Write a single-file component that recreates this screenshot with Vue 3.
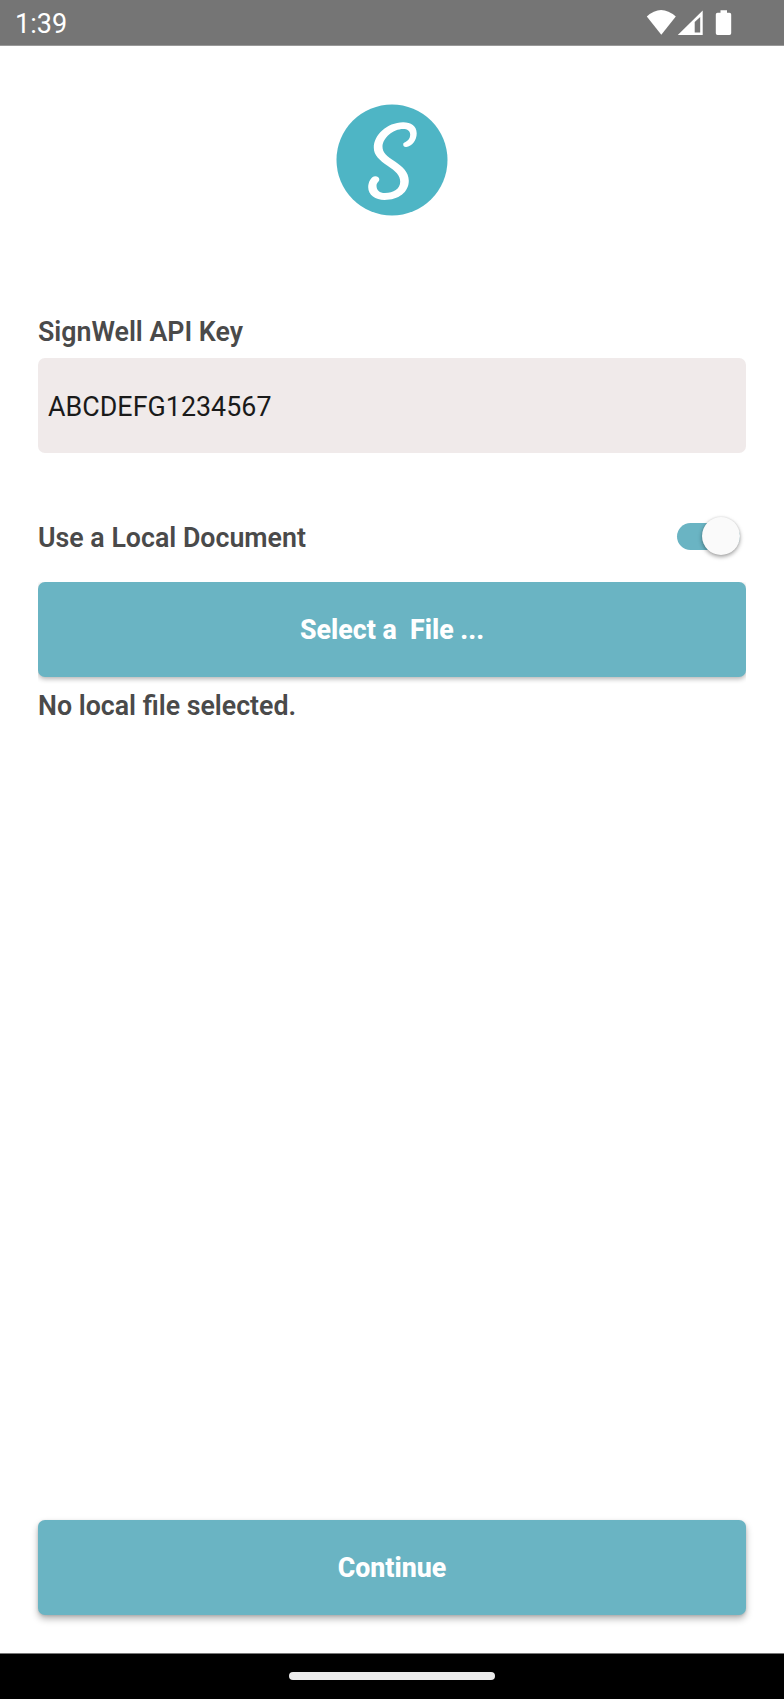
<script setup>
import { ref } from 'vue'

const apiKey = ref('ABCDEFG1234567')
const useLocal = ref(true)
</script>

<template>
  <div class="screen">
    <header class="status">
      <span class="time">1:39</span>
      <svg class="status-icons" width="154" height="45" viewBox="0 0 154 45" fill="#fff">
        <path d="M16.8 16.5Q31 3.5 45.8 16.5L31.3 34.8Z" />
        <path fill-rule="evenodd" d="M72.7 10.5V35H47.8ZM70.2 17L64.7 22V32.5H70.2Z" />
        <path d="M90.5 10.2H97V12.8H99.5Q101.2 12.8 101.2 14.5V33.3Q101.2 35 99.5 35H87.5Q85.8 35 85.8 33.3V14.5Q85.8 12.8 87.5 12.8H90.5Z" />
      </svg>
    </header>

    <main class="content">
      <svg class="logo" width="112" height="112" viewBox="0 0 112 112">
        <circle cx="56" cy="56" r="55.5" fill="#4eb5c5" />
        <path
          transform="translate(0.5 0.3)"
          d="M66.7 40C66.7 41.8 67.8 42.9 69.7 42.7C75.5 42 80.3 36 80.2 29C80 21.5 74.5 18 66.7 18C50 18.3 37.3 31 37.3 43.5C37.3 51 43 56 51 61.5C59 66.8 63.7 71 63.7 77.5C63.7 84.5 57 88.8 48.5 88.8C43 88.8 40 86 40 81.5C40 78.3 42.6 77.5 42.8 75.5C43 73.2 41.2 72 38.8 72C34.5 72 31.7 78 31.7 83C31.7 91 39 95.7 48 95.7C62 95.7 72.3 88 72.3 76.5C72.3 68 66 62.5 58.5 57.3C50 51.5 46 48.5 46 42.5C46 33.5 57 24.7 66.5 24.7C71 24.7 73.7 26.5 73.7 30.5C73.7 34 71.6 36.6 69 37.6C67.5 38.1 66.7 38.8 66.7 40Z"
          fill="#fff"
        />
      </svg>

      <label class="label key-label" for="key">SignWell API Key</label>
      <input id="key" v-model="apiKey" class="field" type="text" spellcheck="false" />

      <div class="row">
        <span class="label doc-label">Use a Local Document</span>
        <button
          class="switch" :class="{ on: useLocal }" role="switch" :aria-checked="useLocal"
          aria-label="Use a Local Document" @click="useLocal = !useLocal"
        >
          <span class="thumb"></span>
        </button>
      </div>

      <div class="file-wrap"><button class="button file">Select a&nbsp; File ...</button></div>
      <p class="label file-note">No local file selected.</p>

      <button class="button continue">Continue</button>
    </main>

    <footer class="nav"><span class="pill"></span></footer>
  </div>
</template>

<style>
body {
  margin: 0;
  background: #fff;
}
</style>

<style scoped>
.screen {
  display: flex;
  flex-direction: column;
  width: 784px;
  height: 1699px;
  overflow: hidden;
  background: #fff;
  font-family: Roboto, "Liberation Sans", sans-serif;
}
.status {
  box-sizing: border-box;
  display: flex;
  justify-content: space-between;
  flex: none;
  height: 46px;
  background: #757575;
  border-bottom: 1px solid #999;
}
.time {
  margin-left: 15px;
  color: #fff;
  font-size: 27px;
  line-height: 48px;
}
.content {
  display: flex;
  flex: 1;
  flex-direction: column;
  padding: 58px 38px 38px;
}
.logo {
  flex: none;
  align-self: center;
}
.label {
  color: #4a4a4a;
  font-size: 26.75px;
  font-weight: 600;
  line-height: 32px;
  white-space: nowrap;
}
.key-label {
  margin-top: 100px;
}
.field {
  box-sizing: border-box;
  height: 95px;
  margin: 10px 0 0;
  padding: 2px 10px 0;
  border: 0;
  border-radius: 7px;
  outline: 0;
  background: #f0eaea;
  color: #1a1a1a;
  font: 400 26.8px Roboto, "Liberation Sans", sans-serif;
  letter-spacing: 0.04px;
}
.row {
  display: flex;
  align-items: center;
  justify-content: space-between;
  height: 48px;
  margin-top: 59px;
}
.doc-label {
  padding-top: 4px;
}
.switch {
  display: flex;
  align-items: center;
  box-sizing: border-box;
  width: 63px;
  height: 27px;
  margin: 0 6px 0 0;
  padding: 0;
  border: 0;
  border-radius: 14px;
  background: #b5b5b5;
}
.switch.on {
  justify-content: flex-end;
  background: #6ab4c3;
}
.thumb {
  flex: none;
  width: 38px;
  height: 38px;
  border-radius: 50%;
  background: #fafafa;
  box-shadow: 0 2px 4px rgba(0, 0, 0, 0.36), 0 0 2px rgba(0, 0, 0, 0.12);
}
.file-wrap {
  display: flex;
  flex: none;
  height: 103px;
  margin-top: 22px;
  overflow: hidden;
}
.button {
  flex: none;
  width: 708px;
  height: 95px;
  padding: 0;
  border: 0;
  border-radius: 7px;
  background: #6ab4c3;
  color: #fff;
  font: 800 26.75px Roboto, "Liberation Sans", sans-serif;
}
.file {
  box-shadow: 0 2px 5px rgba(0, 0, 0, 0.3);
}
.file-note {
  margin: 5px 0 0;
}
.continue {
  margin-top: auto;
  box-shadow: 0 4px 7px rgba(0, 0, 0, 0.28), 0 1px 3px rgba(0, 0, 0, 0.12);
}
.nav {
  box-sizing: border-box;
  display: flex;
  flex: none;
  justify-content: center;
  height: 46px;
  padding-top: 18px;
  border-top: 1px solid #777;
  background: #000;
}
.pill {
  width: 206px;
  height: 8px;
  border-radius: 4px;
  background: #ebebeb;
}
</style>
